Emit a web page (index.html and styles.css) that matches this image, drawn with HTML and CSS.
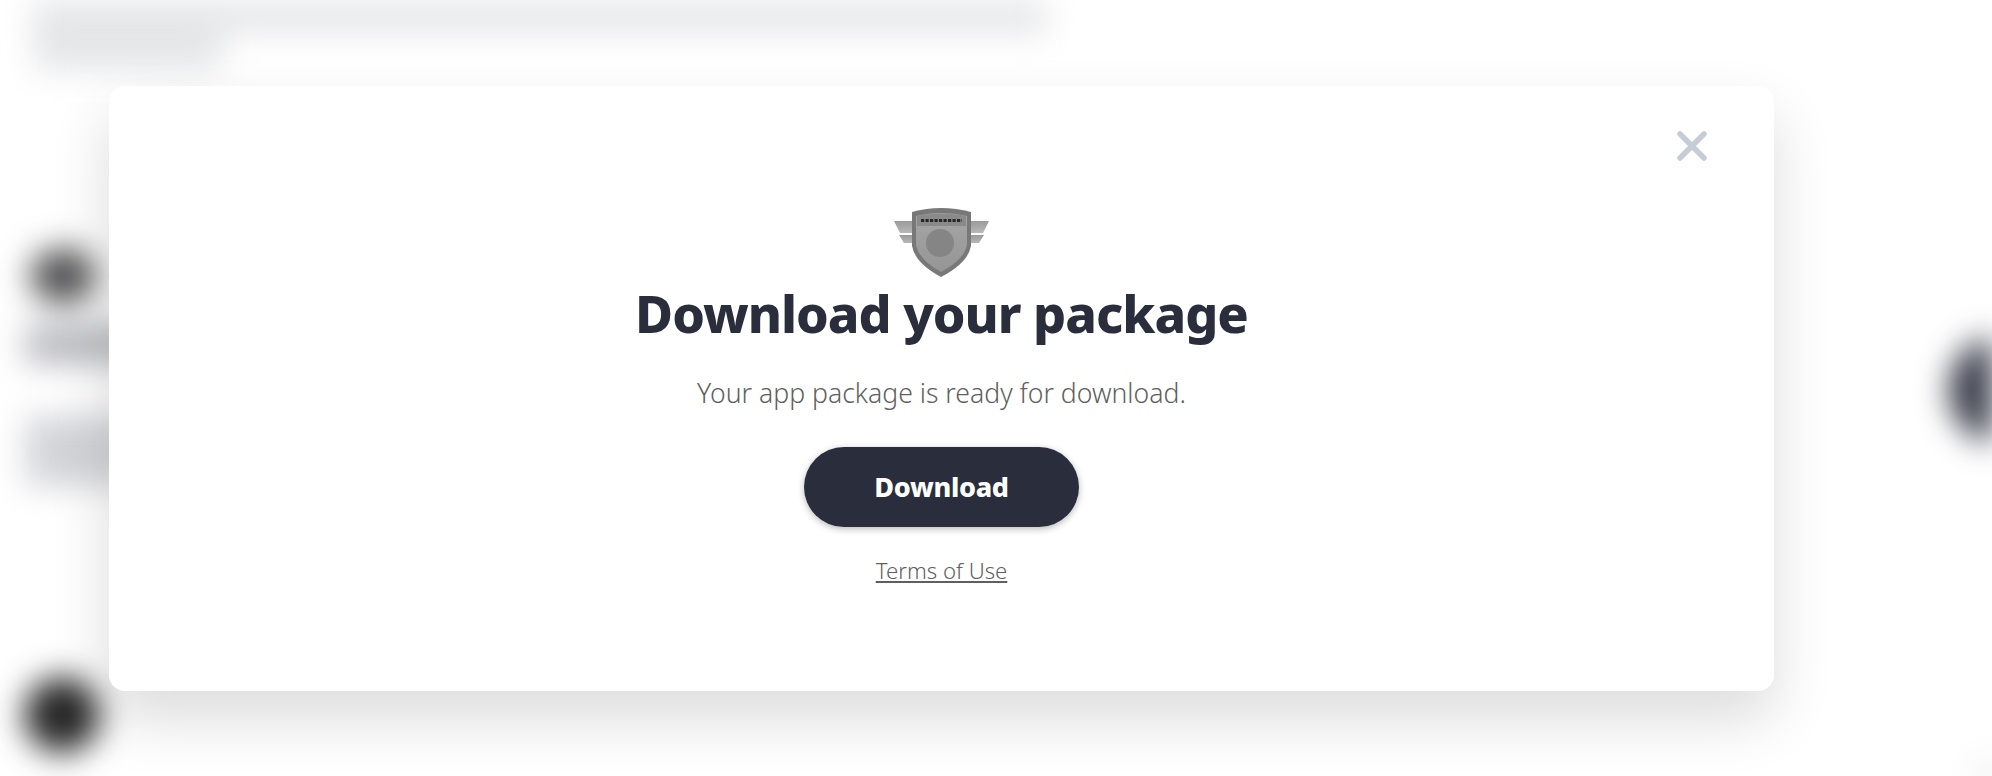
FILE: index.html
```html
<!DOCTYPE HTML>
<html>
<head>
<meta charset="utf-8">
<title>Download your package</title>
<link rel="stylesheet" href="styles.css">
</head>
<body>

<div class="backdrop">
    <div class="blur-line line-one"></div>
    <div class="blur-line line-two"></div>
    <div class="blob blob-title"></div>
    <div class="blur-line line-three"></div>
    <div class="blur-line line-four"></div>
    <div class="blob blob-avatar"></div>
    <div class="blob blob-right"></div>
    <div class="blob blob-corner"></div>
</div>

<div class="overlay">
    <div class="modal">
        <button class="close" aria-label="Close">
            <svg width="30" height="30" viewBox="0 0 30 30">
                <path d="M3 3 L27 27 M27 3 L3 27" stroke="#c5ccd5" stroke-width="5.5" stroke-linecap="round" fill="none"/>
            </svg>
        </button>

        <svg class="badge" width="96" height="71" viewBox="0 0 96 71">
            <defs>
                <linearGradient id="wing" x1="0" y1="0" x2="0" y2="1">
                    <stop offset="0" stop-color="#9a9a9a"/>
                    <stop offset="1" stop-color="#b8b8b8"/>
                </linearGradient>
                <linearGradient id="face" x1="0" y1="0" x2="0" y2="1">
                    <stop offset="0" stop-color="#a6a6a6"/>
                    <stop offset="1" stop-color="#959595"/>
                </linearGradient>
            </defs>
            <path d="M0 14 H20 V26 H6 Z" fill="url(#wing)"/>
            <path d="M5 28 H20 V36 H10 Z" fill="url(#wing)"/>
            <path d="M95 14 H75 V26 H89 Z" fill="url(#wing)"/>
            <path d="M90 28 H75 V36 H85 Z" fill="url(#wing)"/>
            <path d="M18 5 Q47 -3 77 5 V39 Q74 56 47 70 Q21 56 18 39 Z" fill="#787878"/>
            <path d="M22 9 Q47 3 73 9 V38 Q70 53 47 65 Q25 53 22 38 Z" fill="url(#face)"/>
            <path d="M23 9 Q47 4 72 9 V19 H23 Z" fill="#8a8a8a"/>
            <path d="M27 13.5 H68" stroke="#262626" stroke-width="3.2" stroke-dasharray="3.2 1.3" fill="none"/>
            <circle cx="46" cy="36" r="14" fill="#858585"/>
        </svg>

        <h1 class="modal-title">Download your package</h1>
        <p class="modal-text">Your app package is ready for download.</p>
        <a class="download-btn" href="#">Download</a>
        <a class="terms" href="#">Terms of Use</a>
    </div>
</div>

</body>
</html>
```

FILE: styles.css
```css
html, body {
    margin: 0;
    height: 100%;
    overflow: hidden;
    background: #fff;
}
body {
    font-family: "Noto Sans", "Open Sans", sans-serif;
    color: #2a2d3c;
}

/* the page behind the dialog, out of focus */
.backdrop {
    position: absolute;
    top: 0;
    left: 0;
    width: 1992px;
    height: 776px;
    overflow: hidden;
    filter: blur(16px);
}
.blur-line, .blob {
    position: absolute;
}
.line-one {
    left: 32px;
    top: -6px;
    width: 1015px;
    height: 40px;
    background: #e6e7e9;
}
.line-two {
    left: 34px;
    top: 16px;
    width: 188px;
    height: 54px;
    background: #e5e6e8;
}
.blob-title {
    left: 30px;
    top: 248px;
    width: 66px;
    height: 56px;
    border-radius: 50%;
    background: #505052;
}
.line-three {
    left: 26px;
    top: 324px;
    width: 110px;
    height: 40px;
    background: #b9bac0;
}
.line-four {
    left: 26px;
    top: 416px;
    width: 110px;
    height: 70px;
    background: #d3d4d8;
}
.blob-avatar {
    left: 24px;
    top: 677px;
    width: 76px;
    height: 76px;
    border-radius: 50%;
    background: #262626;
}
.blob-right {
    left: 1950px;
    top: 335px;
    width: 110px;
    height: 110px;
    border-radius: 50%;
    background: #2a2d3c;
}
.blob-corner {
    left: 1972px;
    top: 762px;
    width: 90px;
    height: 70px;
    border-radius: 50%;
    background: #2a2d3c;
}

.overlay {
    position: relative;
    padding: 86px 0 0 109px;
}
.modal {
    position: relative;
    box-sizing: border-box;
    width: 1665px;
    height: 605px;
    padding-top: 121px;
    display: flex;
    flex-direction: column;
    align-items: center;
    background: #fff;
    border-radius: 16px;
    box-shadow: 0 28px 60px rgba(0, 0, 0, 0.14);
}
.close {
    position: absolute;
    top: 45px;
    right: 67px;
    width: 30px;
    height: 30px;
    padding: 0;
    border: 0;
    background: none;
}
.close svg {
    display: block;
}
.badge {
    display: block;
    filter: blur(0.4px);
}
.modal-title {
    margin: -1px 0 0;
    font-size: 52px;
    line-height: 72px;
    font-weight: 800;
    letter-spacing: -1px;
    color: #2a2d3c;
}
.modal-text {
    margin: 24px 0 0;
    font-size: 26.6px;
    font-weight: 300;
    line-height: 40px;
    color: #5f5f5f;
}
.download-btn {
    margin-top: 34px;
    width: 275px;
    height: 80px;
    line-height: 80px;
    text-align: center;
    border-radius: 40px;
    background: #2a2d3c;
    color: #fff;
    font-size: 27px;
    font-weight: 800;
    letter-spacing: -0.3px;
    text-decoration: none;
    box-shadow: 0 2px 7px rgba(0, 0, 0, 0.28);
}
.terms {
    margin-top: 28px;
    font-size: 22.2px;
    font-weight: 300;
    line-height: 32px;
    color: #5f5f5f;
}
```
